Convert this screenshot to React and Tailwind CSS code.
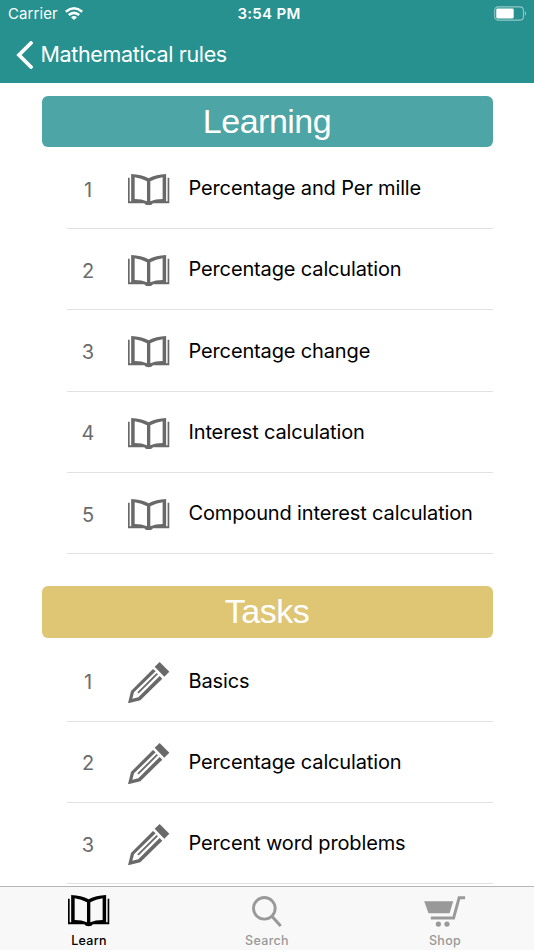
import React from 'react';

const sections = [
  {
    title: 'Learning',
    icon: 'book',
    barClass: 'bg-[#4da5a5]',
    listClass: 'pt-[0.6px]',
    items: [
      'Percentage and Per mille',
      'Percentage calculation',
      'Percentage change',
      'Interest calculation',
      'Compound interest calculation',
    ],
  },
  {
    title: 'Tasks',
    icon: 'pencil',
    barClass: 'bg-[#dfc674]',
    listClass: 'pt-[2.9px]',
    items: ['Basics', 'Percentage calculation', 'Percent word problems'],
  },
];

function BookIcon({ className }) {
  return (
    <svg className={className} viewBox="0 0 124 94" fill="currentColor">
      <path d="M0 11H5V82H9.5V0Q40 2 62 12.5Q84 2 114.5 0V82H119V11H124V88H75Q72 94 62 94Q52 94 49 88H0ZM20 10V75Q42 75 57 82V22Q40 13 20 10ZM104 10V75Q82 75 67 82V22Q84 13 104 10Z" fillRule="evenodd" />
    </svg>
  );
}

function PencilIcon({ className }) {
  return (
    <svg className={className} viewBox="0 0 124 124" fill="currentColor">
      <path d="M95 0L124 29L109 44L80 14Z" />
      <path d="M75 21L9 87L0 124L37 115L103 50L95 42L31 106L13 110L18 91L83 28Z" />
      <path d="M88 35L30 93" stroke="currentColor" strokeWidth="5.5" />
    </svg>
  );
}

function SearchIcon({ className }) {
  return (
    <svg className={className} viewBox="0 0 90 93" fill="none" stroke="currentColor">
      <circle cx="37" cy="37" r="32.5" strokeWidth="8.5" />
      <path d="M61 62L86 90" strokeWidth="9" />
    </svg>
  );
}

function CartIcon({ className }) {
  return (
    <svg className={className} viewBox="0 0 124 94" fill="currentColor">
      <path d="M0 16H88L77 52H13Z" />
      <path d="M124 5H106L89 67H20" fill="none" stroke="currentColor" strokeWidth="9" />
      <circle cx="43" cy="85" r="8" />
      <circle cx="69" cy="85" r="8" />
    </svg>
  );
}

function StatusBar() {
  return (
    <div className="grid h-7 grid-cols-3 items-center pr-[7px] pl-2 text-[15px]">
      <div className="flex items-center gap-[7px]">
        <span className="tracking-[0.1px]">Carrier</span>
        <svg className="mb-[2px] h-[13px] w-[18px]" viewBox="0 0 54 39" fill="currentColor">
          <path d="M0 11Q27 -11 54 11L49 17Q27 -2 5 17Z" />
          <path d="M9 21Q27 6 45 21L40 27Q27 16 14 27Z" />
          <path d="M18 31Q27 23 36 31L27 39Z" />
        </svg>
      </div>
      <span className="pl-[3px] text-center text-[15px] font-semibold tracking-[0.3px]">3:54 PM</span>
      <svg className="mb-[2px] h-[15px] w-[33px] justify-self-end" viewBox="0 0 34 15">
        <rect x="0.7" y="0.7" width="29.6" height="13.6" rx="3.4" fill="none" stroke="#92c8c7" strokeWidth="1.1" />
        <rect x="2.3" y="2.4" width="18" height="10.2" rx="1.2" fill="white" />
        <path d="M31.8 5Q34.4 7.5 31.8 10Z" fill="#92c8c7" />
      </svg>
    </div>
  );
}

function Section({ title, icon, barClass, listClass, items }) {
  const Icon = icon === 'book' ? BookIcon : PencilIcon;

  return (
    <section>
      <h2
        className={`flex h-[51.5px] items-center justify-center rounded-[6px] pb-[2px] font-['Liberation_Sans',sans-serif] text-[34px] leading-none tracking-[-0.5px] text-white ${barClass}`}
      >
        {title}
      </h2>
      <ul className={`pl-[25.5px] ${listClass}`}>
        {items.map((item, index) => (
          <li key={item} className="flex h-[81.25px] items-center border-b border-[#e1e1e1]">
            <span className="w-[42px] pt-[3px] text-center text-[20px] text-[#6b6b6b]">{index + 1}</span>
            <div className="ml-[19px] flex w-[42px] shrink-0 justify-center pt-[3px]">
              <Icon className={icon === 'book' ? 'h-[31.3px] w-[41.3px]' : 'size-[41.3px]'} />
            </div>
            <span className="ml-[18.5px] whitespace-nowrap text-[20px] tracking-[-0.14px] text-black">{item}</span>
          </li>
        ))}
      </ul>
    </section>
  );
}

function Tab({ label, icon, active }) {
  return (
    <button
      type="button"
      className={`flex flex-1 flex-col items-center pt-[8.5px] ${active ? 'text-black' : 'text-[#999999]'}`}
    >
      <div className="flex h-[31px] items-center">{icon}</div>
      <span className="mt-[5px] text-[12.5px] leading-[18px] font-medium tracking-[0.3px]">{label}</span>
    </button>
  );
}

export default function App() {
  return (
    <div className="flex h-[950px] w-[534px] flex-col overflow-hidden bg-white font-['Inter',sans-serif]">
      <header className="h-[83px] shrink-0 bg-[#26918f] text-white">
        <StatusBar />
        <div className="flex h-[54px] items-center pl-[16px]">
          <svg className="h-[28px] w-[17px]" viewBox="0 0 17 28" fill="none" stroke="currentColor">
            <path d="M15 2L3 14L15 26" strokeWidth="3.8" strokeLinecap="round" />
          </svg>
          <h1 className="ml-[7.5px] pb-px text-[21.5px] tracking-[-0.35px]">Mathematical rules</h1>
        </div>
      </header>

      <main className="flex min-h-0 flex-1 flex-col gap-8 overflow-hidden pt-[12.8px] pr-[41.5px] pl-[41.5px] text-[#696969]">
        {sections.map((section) => (
          <Section key={section.title} {...section} />
        ))}
      </main>

      <nav className="flex h-[64px] shrink-0 border-t border-[#b5b5b5] bg-[#f8f8f8]">
        <Tab label="Learn" icon={<BookIcon className="h-[31.3px] w-[41.3px]" />} active />
        <Tab label="Search" icon={<SearchIcon className="h-[31px] w-[30px]" />} />
        <Tab label="Shop" icon={<CartIcon className="h-[31px] w-[41.3px]" />} />
      </nav>
    </div>
  );
}
